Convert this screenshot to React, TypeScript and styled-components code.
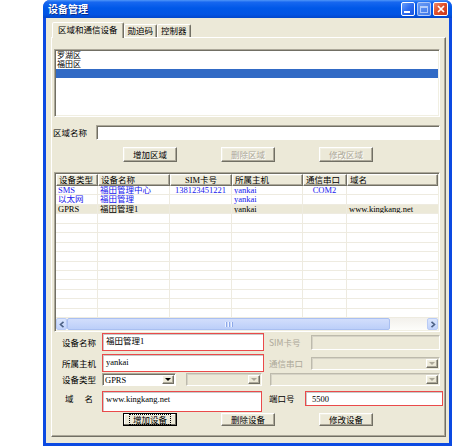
import React from "react";
import styled, { createGlobalStyle, css } from "styled-components";

const GlobalStyle = createGlobalStyle`
  html, body {
    margin: 0;
    padding: 0;
    background: #ffffff;
  }
  body {
    font-family: "Liberation Serif", "Noto Sans CJK SC", serif;
    font-size: 8.5px;
    line-height: 9px;
    color: #000000;
  }
  * {
    box-sizing: border-box;
  }
`;

const sunken = css`
  border: 1px solid;
  border-color: #aca899 #ffffff #ffffff #aca899;
  box-shadow: inset 1px 1px 0 #716f64, inset -1px -1px 0 #f1efe2;
  padding: 1px;
`;

const raised = css`
  border: 1px solid;
  border-color: #ffffff #716f64 #716f64 #ffffff;
  box-shadow: inset -1px -1px 0 #aca899, inset 1px 1px 0 #f1efe2;
`;

const Window = styled.div`
  margin-left: 43px;
  width: 409px;
  height: 446px;
  display: flex;
  flex-direction: column;
  background: #0c4ae2;
  border-radius: 7px 7px 0 0;
  overflow: hidden;
`;

const TitleBar = styled.div`
  flex: none;
  height: 18px;
  display: flex;
  align-items: center;
  padding: 0 4px 0 5px;
  background: linear-gradient(180deg, #4f96f8 0%, #1767f0 12%, #0058e8 45%, #0254e3 80%, #0247cb 100%);
`;

const Title = styled.span`
  flex: 1;
  color: #ffffff;
  font-family: "Noto Sans CJK SC", sans-serif;
  font-weight: 700;
  font-size: 10px;
  line-height: 12px;
  text-shadow: 1px 1px 0 #0b2c8a;
`;

const CaptionButton = styled.div<{ $kind: "min" | "max" | "close" }>`
  width: 14px;
  height: 14px;
  margin-left: 2px;
  border: 1px solid ${(p) => (p.$kind === "max" ? "rgba(255,255,255,0.55)" : "#ffffff")};
  border-radius: 2px;
  display: flex;
  align-items: center;
  justify-content: center;
  background: ${(p) =>
    p.$kind === "close"
      ? "linear-gradient(135deg, #f08a6c 0%, #e0512b 45%, #c8361b 100%)"
      : p.$kind === "max"
      ? "linear-gradient(135deg, #6c9cf3 0%, #4f86ef 60%, #3f76e6 100%)"
      : "linear-gradient(135deg, #6aa0fb 0%, #2d6cf0 50%, #1a55de 100%)"};
  &:last-child {
    width: 15px;
  }
`;

const MinGlyph = styled.span`
  width: 6px;
  height: 2px;
  background: #ffffff;
  margin: 6px 3px 0 0;
`;

const MaxGlyph = styled.span`
  width: 8px;
  height: 7px;
  border: 1px solid rgba(220, 232, 255, 0.7);
  border-top-width: 2px;
`;

const Client = styled.div`
  flex: 1;
  margin: 0 3px 3px;
  background: #ece9d8;
  padding: 3px 3px 6px 5px;
  display: flex;
  flex-direction: column;
`;

const TabRow = styled.div`
  flex: none;
  height: 16px;
  display: flex;
  align-items: flex-end;
  padding-left: 1px;
`;

const Tab = styled.div<{ $active?: boolean }>`
  position: relative;
  z-index: ${(p) => (p.$active ? 1 : 0)};
  height: ${(p) => (p.$active ? 16 : 13)}px;
  margin-bottom: ${(p) => (p.$active ? -1 : 0)}px;
  padding: 0 ${(p) => (p.$active ? 5 : 3)}px;
  border: 1px solid;
  border-bottom: none;
  border-color: #ffffff #716f64 transparent #ffffff;
  border-radius: 2px 2px 0 0;
  box-shadow: inset -1px 0 0 #aca899;
  background: #ece9d8;
  font-family: "Noto Sans CJK SC", sans-serif;
  line-height: ${(p) => (p.$active ? 13 : 11)}px;
  white-space: nowrap;
`;

const TabPage = styled.div`
  flex: 1;
  border: 1px solid;
  border-color: #ffffff #716f64 #716f64 #ffffff;
  box-shadow: inset -1px -1px 0 #aca899;
  padding: 11px 5px 0 2px;
  display: flex;
  flex-direction: column;
`;

const ListBox = styled.div`
  ${sunken};
  flex: none;
  height: 68px;
  background: #ffffff;
  font-size: 8px;
`;

const ListItem = styled.div<{ $selected?: boolean }>`
  height: 9px;
  line-height: 9px;
  padding-left: 1px;
  overflow: hidden;
  background: ${(p) => (p.$selected ? "#316ac5" : "transparent")};
  color: ${(p) => (p.$selected ? "#ffffff" : "#000000")};
`;

const Row = styled.div<{ $h: number; $top: number; $align?: string }>`
  flex: none;
  display: flex;
  align-items: ${(p) => p.$align ?? "center"};
  height: ${(p) => p.$h}px;
  margin-top: ${(p) => p.$top}px;
`;

const FieldLabel = styled.div<{ $w: number; $indent?: number; $disabled?: boolean; $gap?: number }>`
  flex: none;
  display: flex;
  gap: ${(p) => p.$gap ?? 0}px;
  width: ${(p) => p.$w}px;
  padding-left: ${(p) => p.$indent ?? 0}px;
  font-family: "Noto Sans CJK SC", sans-serif;
  line-height: 15px;
  color: ${(p) => (p.$disabled ? "#aca899" : "#000000")};
  white-space: nowrap;
`;

const Field = styled.div<{ $w?: number; $h: number; $invalid?: boolean; $disabled?: boolean; $gap?: number }>`
  flex: ${(p) => (p.$w ? "none" : "1")};
  width: ${(p) => (p.$w ? `${p.$w}px` : "auto")};
  height: ${(p) => p.$h}px;
  margin-left: ${(p) => p.$gap ?? 0}px;
  display: flex;
  align-items: flex-start;
  padding: 2px 2px 0 3px;
  line-height: 10px;
  white-space: nowrap;
  overflow: hidden;
  background: ${(p) => (p.$disabled ? "#ece9d8" : "#ffffff")};
  border: 1px solid;
  border-color: ${(p) =>
    p.$invalid ? "#ea4a4a" : p.$disabled ? "#bdbaac #ffffff #ffffff #bdbaac" : "#aca899 #ffffff #ffffff #aca899"};
  box-shadow: ${(p) =>
    p.$invalid ? "inset 1px 1px 0 #c9c9c9" : p.$disabled ? "inset 1px 1px 0 #d6d3c6" : "inset 1px 1px 0 #716f64"};
`;

const Combo = styled.div<{ $w: number; $disabled?: boolean; $gap?: number }>`
  flex: none;
  width: ${(p) => p.$w}px;
  height: 13px;
  margin-left: ${(p) => p.$gap ?? 0}px;
  display: flex;
  align-items: stretch;
  background: ${(p) => (p.$disabled ? "#ece9d8" : "#ffffff")};
  border: 1px solid;
  border-color: ${(p) => (p.$disabled ? "#bdbaac #ffffff #ffffff #bdbaac" : "#aca899 #ffffff #ffffff #aca899")};
  box-shadow: inset 1px 1px 0 ${(p) => (p.$disabled ? "#d6d3c6" : "#716f64")};
`;

const ComboText = styled.span`
  flex: 1;
  padding: 1px 0 0 2px;
  line-height: 10px;
`;

const DropButton = styled.div<{ $disabled?: boolean }>`
  ${raised};
  width: 12px;
  margin: 1px 1px 1px 0;
  background: #ece9d8;
  display: flex;
  align-items: center;
  justify-content: center;
  &::after {
    content: "";
    border-left: 3px solid transparent;
    border-right: 3px solid transparent;
    border-top: 3px solid ${(p) => (p.$disabled ? "#aca899" : "#000000")};
  }
`;

const ButtonRow = styled.div<{ $top: number; $h: number }>`
  flex: none;
  display: flex;
  gap: 44px;
  padding-left: 69px;
  height: ${(p) => p.$h}px;
  margin-top: ${(p) => p.$top}px;
`;

const Button = styled.div<{ $disabled?: boolean; $focused?: boolean }>`
  ${raised};
  width: 54px;
  display: flex;
  align-items: center;
  justify-content: center;
  background: #ece9d8;
  font-family: "Noto Sans CJK SC", sans-serif;
  color: ${(p) => (p.$disabled ? "#aca899" : "#000000")};
  text-shadow: ${(p) => (p.$disabled ? "1px 1px 0 #ffffff" : "none")};
  ${(p) =>
    p.$focused &&
    css`
      border-color: #000000;
      box-shadow: inset -1px -1px 0 #716f64, inset 1px 1px 0 #ffffff;
    `}
`;

const FocusRing = styled.span`
  padding: 0 3px;
  outline: 1px dotted #000000;
  outline-offset: 0;
  line-height: 9px;
`;

const columns = "42px 72px 62px 71px 44px 1fr";

const Grid = styled.div`
  ${sunken};
  flex: none;
  margin-top: 10px;
  background: #ffffff;
  display: flex;
  flex-direction: column;
`;

const GridHeader = styled.div`
  display: grid;
  grid-template-columns: ${columns};
  height: 12px;
`;

const HeaderCell = styled.div<{ $center?: boolean }>`
  ${raised};
  background: #ece9d8;
  padding-left: ${(p) => (p.$center ? 0 : 2)}px;
  text-align: ${(p) => (p.$center ? "center" : "left")};
  line-height: 10px;
  white-space: nowrap;
  overflow: hidden;
`;

const GridRow = styled.div<{ $selected?: boolean; $blue?: boolean }>`
  display: grid;
  grid-template-columns: ${columns};
  height: 9.45px;
  border-bottom: 1px solid #eeebe0;
  background: ${(p) => (p.$selected ? "#ece9d8" : "#ffffff")};
  color: ${(p) => (p.$blue ? "#1616ee" : "#000000")};
`;

const Cell = styled.div<{ $center?: boolean }>`
  border-right: 1px solid #eeebe0;
  padding-left: ${(p) => (p.$center ? 0 : 2)}px;
  text-align: ${(p) => (p.$center ? "center" : "left")};
  line-height: 8.5px;
  white-space: nowrap;
  overflow: hidden;
  &:last-child {
    border-right: none;
  }
`;

const HScroll = styled.div`
  display: flex;
  height: 12px;
  background: linear-gradient(180deg, #f3f1ec 0%, #fdfdfa 100%);
`;

const ScrollArrow = styled.div`
  flex: none;
  width: 11px;
  border: 1px solid #b9cbf5;
  border-radius: 2px;
  background: linear-gradient(180deg, #dbe6fd 0%, #c1d3fb 100%);
  display: flex;
  align-items: center;
  justify-content: center;
`;

const Thumb = styled.div`
  flex: none;
  width: 323px;
  border: 1px solid #a9bff1;
  border-radius: 2px;
  background: linear-gradient(180deg, #d2defc 0%, #bccff9 100%);
  display: flex;
  align-items: center;
  justify-content: center;
  gap: 1px;
`;

const GripLine = styled.span`
  width: 1px;
  height: 5px;
  background: #eef3ff;
  box-shadow: 1px 0 0 #8ca8e8;
  margin-right: 1px;
`;

const Track = styled.div`
  flex: 1;
`;

type Device = {
  type: string;
  name: string;
  sim: string;
  host: string;
  port: string;
  domain: string;
  blue?: boolean;
  selected?: boolean;
};

const devices: Device[] = [
  { type: "SMS", name: "福田管理中心", sim: "138123451221", host: "yankai", port: "COM2", domain: "", blue: true },
  { type: "以太网", name: "福田管理", sim: "", host: "yankai", port: "", domain: "", blue: true },
  { type: "GPRS", name: "福田管理1", sim: "", host: "yankai", port: "", domain: "www.kingkang.net", selected: true },
];

const emptyRows = Array.from({ length: 11 }, (_, i) => i);

const Chevron = ({ dir }: { dir: "left" | "right" }) => (
  <svg width="6" height="7" viewBox="0 0 6 7">
    <path
      d={dir === "left" ? "M4.5 0.8 L1.5 3.5 L4.5 6.2" : "M1.5 0.8 L4.5 3.5 L1.5 6.2"}
      fill="none"
      stroke="#4d6185"
      strokeWidth="1.6"
    />
  </svg>
);

const App = () => {
  return (
    <>
      <GlobalStyle />
      <Window>
        <TitleBar>
          <Title>设备管理</Title>
          <CaptionButton $kind="min">
            <MinGlyph />
          </CaptionButton>
          <CaptionButton $kind="max">
            <MaxGlyph />
          </CaptionButton>
          <CaptionButton $kind="close">
            <svg width="8" height="8" viewBox="0 0 8 8">
              <path d="M1 1 L7 7 M7 1 L1 7" stroke="#ffffff" strokeWidth="1.7" />
            </svg>
          </CaptionButton>
        </TitleBar>
        <Client>
          <TabRow>
            <Tab $active>区域和通信设备</Tab>
            <Tab>勋迫码</Tab>
            <Tab>控制器</Tab>
          </TabRow>
          <TabPage>
            <ListBox>
              <ListItem>罗湖区</ListItem>
              <ListItem>福田区</ListItem>
              <ListItem $selected />
            </ListBox>

            <Row $h={15} $top={8}>
              <FieldLabel $w={43} style={{ marginLeft: -1 }}>区域名称</FieldLabel>
              <Field $h={15} />
            </Row>

            <ButtonRow $top={7} $h={15}>
              <Button>增加区域</Button>
              <Button $disabled>删除区域</Button>
              <Button $disabled>修改区域</Button>
            </ButtonRow>

            <Grid>
              <GridHeader>
                <HeaderCell>设备类型</HeaderCell>
                <HeaderCell>设备名称</HeaderCell>
                <HeaderCell $center>SIM卡号</HeaderCell>
                <HeaderCell>所属主机</HeaderCell>
                <HeaderCell>通信串口</HeaderCell>
                <HeaderCell>域名</HeaderCell>
              </GridHeader>
              {devices.map((d, i) => (
                <GridRow key={i} $blue={d.blue} $selected={d.selected}>
                  <Cell>{d.type}</Cell>
                  <Cell>{d.name}</Cell>
                  <Cell $center>{d.sim}</Cell>
                  <Cell>{d.host}</Cell>
                  <Cell $center>{d.port}</Cell>
                  <Cell>{d.domain}</Cell>
                </GridRow>
              ))}
              {emptyRows.map((i) => (
                <GridRow key={`e${i}`}>
                  <Cell />
                  <Cell />
                  <Cell />
                  <Cell />
                  <Cell />
                  <Cell />
                </GridRow>
              ))}
              <HScroll>
                <ScrollArrow>
                  <Chevron dir="left" />
                </ScrollArrow>
                <Thumb>
                  <GripLine />
                  <GripLine />
                  <GripLine />
                </Thumb>
                <Track />
                <ScrollArrow>
                  <Chevron dir="right" />
                </ScrollArrow>
              </HScroll>
            </Grid>

            <Row $h={18} $top={1}>
              <FieldLabel $w={48} $indent={8}>设备名称</FieldLabel>
              <Field $w={162} $h={18} $invalid>福田管理1</Field>
              <FieldLabel $w={47} $indent={5} $disabled>SIM卡号</FieldLabel>
              <Field $w={129} $h={15} $disabled />
            </Row>

            <Row $h={18} $top={3}>
              <FieldLabel $w={48} $indent={8}>所属主机</FieldLabel>
              <Field $w={162} $h={18} $invalid>yankai</Field>
              <FieldLabel $w={47} $indent={5} $disabled>通信串口</FieldLabel>
              <Combo $w={129} $disabled>
                <ComboText />
                <DropButton $disabled />
              </Combo>
            </Row>

            <Row $h={13} $top={1}>
              <FieldLabel $w={48} $indent={8}>设备类型</FieldLabel>
              <Combo $w={74}>
                <ComboText>GPRS</ComboText>
                <DropButton />
              </Combo>
              <Combo $w={76} $gap={10} $disabled>
                <ComboText />
                <DropButton $disabled />
              </Combo>
              <Combo $w={170} $gap={8} $disabled>
                <ComboText />
                <DropButton $disabled />
              </Combo>
            </Row>

            <Row $h={21} $top={5} $align="flex-start">
              <FieldLabel $w={48} $indent={11} $gap={11}>
                <span>域</span>
                <span>名</span>
              </FieldLabel>
              <Field $w={160} $h={21} $invalid>www.kingkang.net</Field>
              <FieldLabel $w={43} $indent={7}>端口号</FieldLabel>
              <Field $w={138} $h={15} $invalid style={{ paddingLeft: 6 }}>5500</Field>
            </Row>

            <ButtonRow $top={1} $h={13}>
              <Button $focused>
                <FocusRing>增加设备</FocusRing>
              </Button>
              <Button>删除设备</Button>
              <Button>修改设备</Button>
            </ButtonRow>
          </TabPage>
        </Client>
      </Window>
    </>
  );
};

export default App;
